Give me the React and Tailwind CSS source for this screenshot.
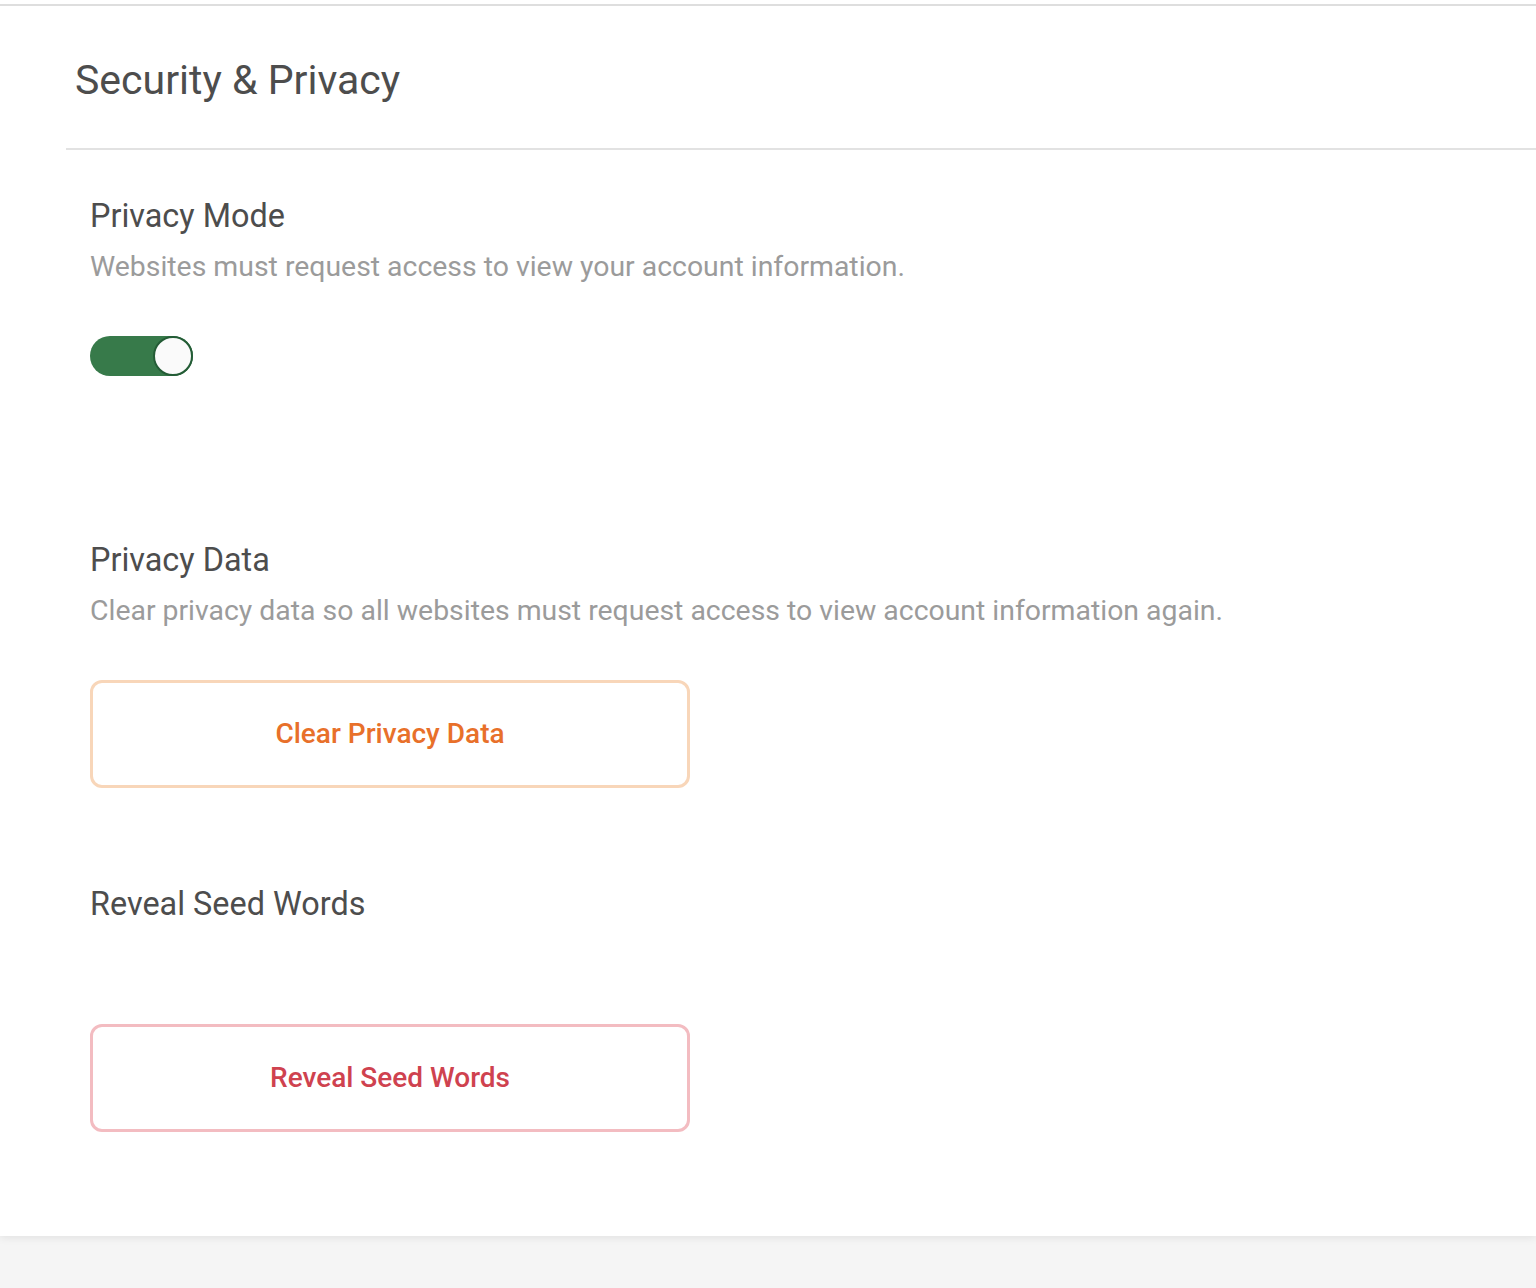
import React from "react";

function Section({ label, desc, children }) {
  return (
    <div className="flex h-[344px] flex-col">
      <div className="text-[32.4px] leading-[38px] text-[#4d4d4d]">{label}</div>
      <div className="mt-[15px] h-[33px] text-[28.4px] leading-[33px] text-[#9b9b9b]">{desc}</div>
      <div className="mt-[53px]">{children}</div>
    </div>
  );
}

function Toggle() {
  return (
    <div className="flex h-[40px] w-[103px] items-center justify-end rounded-full bg-[#377a4a]">
      <div className="h-[40px] w-[40px] rounded-full border-2 border-[#245c36] bg-[#fafafa]" />
    </div>
  );
}

function OutlineButton({ children, tone }) {
  const cls =
    tone === "orange"
      ? "border-[#f8d6b9] text-[#e8702a]"
      : "border-[#f3bcc1] text-[#cf424f]";
  return (
    <button
      className={
        "flex h-[108px] w-[600px] items-center justify-center rounded-[12px] border-[3px] bg-white text-[28px] font-medium " +
        cls
      }
    >
      {children}
    </button>
  );
}

export default function App() {
  return (
    <div className="min-h-[1288px] bg-[#f5f5f5]" style={{ fontFamily: "Roboto, 'Noto Sans', sans-serif" }}>
      <div className="h-[1236px] bg-white pt-1 shadow-[0_2px_8px_rgba(0,0,0,0.08)]">
        <div className="border-t-2 border-[#dedede]">
          <div className="pl-[66px]">
            <div className="border-b-2 border-[#e2e2e2] pb-[44px] pl-[9px] pt-[50px] text-[41px] leading-[48px] text-[#4d4d4d]">
              Security &amp; Privacy
            </div>
          </div>
          <div className="pl-[90px] pt-[47px]">
            <Section label="Privacy Mode" desc="Websites must request access to view your account information.">
              <Toggle />
            </Section>
            <Section
              label="Privacy Data"
              desc="Clear privacy data so all websites must request access to view account information again."
            >
              <OutlineButton tone="orange">Clear Privacy Data</OutlineButton>
            </Section>
            <Section label="Reveal Seed Words" desc="">
              <OutlineButton tone="red">Reveal Seed Words</OutlineButton>
            </Section>
          </div>
        </div>
      </div>
    </div>
  );
}
